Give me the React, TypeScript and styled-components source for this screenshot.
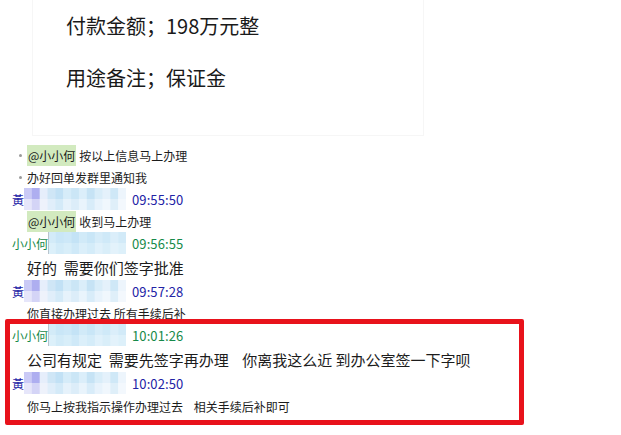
import React from 'react'
import styled, { createGlobalStyle } from 'styled-components'

const Global = createGlobalStyle`
  html, body {
    margin: 0;
    padding: 0;
    background: #ffffff;
  }
  body {
    font-family: "Noto Sans CJK SC", "Noto Sans", sans-serif;
    color: #1a1a1a;
  }
`

const Page = styled.div`
  width: 621px;
  height: 435px;
  overflow: hidden;
  background: #fff;
`

const Top = styled.div`
  height: 144px;
  padding-left: 32px;
  box-sizing: border-box;
`

const Card = styled.div`
  width: 392px;
  height: 136px;
  box-sizing: border-box;
  border: 1px solid #f6f6f6;
  border-top: none;
  padding: 12px 0 0 33px;
  display: flex;
  flex-direction: column;
  gap: 24px;
`

const Line = styled.div`
  font-size: 20px;
  line-height: 28px;
  color: #1a1a1a;
`

const Chat = styled.div`
  padding-left: 12px;
  display: flex;
  flex-direction: column;
`

const Row = styled.div<{ $h?: number; $indent?: number }>`
  height: ${p => p.$h ?? 22}px;
  display: flex;
  align-items: center;
  padding-left: ${p => p.$indent ?? 15}px;
  white-space: pre;
`

const Bullet = styled.span`
  width: 3px;
  height: 3px;
  border-radius: 50%;
  background: #9a9a9a;
  margin: 0 5px 0 -8px;
`

const Mention = styled.span`
  background: #d2eabf;
  font-size: 12px;
  line-height: 21px;
  padding: 0 1px;
  margin-right: 3px;
`

const Msg = styled.span<{ $big?: boolean }>`
  font-size: ${p => (p.$big ? 15 : 12)}px;
  color: #1c1c1c;
`

const Name = styled.span<{ $c: string }>`
  font-size: 12px;
  color: ${p => p.$c};
`

const Time = styled.span<{ $c: string }>`
  font-size: 13px;
  color: ${p => p.$c};
  margin-left: 6px;
  letter-spacing: 0.1px;
`

const Marked = styled.div`
  margin: -5px 0 0 -7px;
  width: 519px;
  box-sizing: border-box;
  border: 5px solid #e8121b;
  border-radius: 2px;
  padding: 0 0 2px 2px;
  display: flex;
  flex-direction: column;
`

const HUANG = [
  ['#cacaf6', '#aeaef0', '#e6eefb', '#cfe6f6', '#c2e1f5', '#d6ecf9', '#cbe6f6', '#dbeefa', '#c6e3f5', '#d9edf9', '#e4f1fb', '#cfe8f7', '#edf5fc'],
  ['#e6e6fa', '#d4d4f6', '#eef2fb', '#e0eefa', '#d4eaf8', '#e6f2fb', '#dcedf9', '#e9f4fc', '#d8ecf9', '#e8f3fc', '#f0f7fd', '#dfeff9', '#f3f8fd'],
]

const HE = [
  ['#d3ebf8', '#c9e6f7', '#cde8f8', '#c4e3f6', '#d1eaf8', '#c9e6f7', '#d6ecf9', '#cfe9f8', '#dbeefa', '#d2eaf8'],
  ['#dcf0fa', '#d2ebf8', '#d8eef9', '#cfe9f8', '#dbeffa', '#d4ecf9', '#e0f1fb', '#d9eef9', '#e3f2fb', '#ddf0fa'],
]

function Mosaic({ cells, w, edge }: { cells: string[][]; w: number; edge?: boolean }) {
  const cw = w / cells[0].length
  return (
    <svg width={w} height={22} style={{ display: 'block' }}>
      {cells.map((r, ri) =>
        r.map((c, ci) => (
          <rect key={ri + '-' + ci} x={ci * cw} y={ri * 11} width={cw + 0.5} height={11} fill={c} />
        ))
      )}
      {edge && <rect x={0} y={0} width={1} height={22} fill="#b9c4cc" />}
    </svg>
  )
}

const BLUE = '#2323a6'
const GREEN = '#178a4a'

function Head({ who, time }: { who: 'h' | 'x'; time: string }) {
  if (who === 'h') {
    return (
      <Row $indent={0}>
        <Name $c={BLUE}>黃</Name>
        <Mosaic cells={HUANG} w={102} />
        <Time $c={BLUE}>{time}</Time>
      </Row>
    )
  }
  return (
    <Row $indent={0}>
      <Name $c={GREEN}>小小何</Name>
      <Mosaic cells={HE} w={78} edge />
      <Time $c={GREEN}>{time}</Time>
    </Row>
  )
}

export default function App() {
  return (
    <Page>
      <Global />
      <Top>
        <Card>
          <Line>付款金额；198万元整</Line>
          <Line>用途备注；保证金</Line>
        </Card>
      </Top>
      <Chat>
        <Row>
          <Bullet />
          <Mention>@小小何</Mention>
          <Msg>按以上信息马上办理</Msg>
        </Row>
        <Row>
          <Bullet />
          <Msg>办好回单发群里通知我</Msg>
        </Row>
        <Head who="h" time="09:55:50" />
        <Row>
          <Mention>@小小何</Mention>
          <Msg>收到马上办理</Msg>
        </Row>
        <Head who="x" time="09:56:55" />
        <Row $h={26}>
          <Msg $big>好的  需要你们签字批准</Msg>
        </Row>
        <Head who="h" time="09:57:28" />
        <Row>
          <Msg>你直接办理过去 所有手续后补</Msg>
        </Row>
        <Marked>
          <Head who="x" time="10:01:26" />
          <Row $h={26}>
            <Msg $big>公司有规定  需要先签字再办理    你离我这么近 到办公室签一下字呗</Msg>
          </Row>
          <Head who="h" time="10:02:50" />
          <Row $h={24}>
            <Msg>你马上按我指示操作办理过去    相关手续后补即可</Msg>
          </Row>
        </Marked>
      </Chat>
    </Page>
  )
}
